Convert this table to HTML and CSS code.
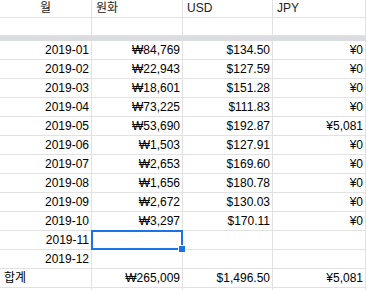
FILE: index.html
```html
<!DOCTYPE html>
<html lang="ko">
<head>
<meta charset="utf-8">
<link rel="stylesheet" href="styles.css">
</head>
<body>
<div class="sheet">
  <div class="row head">
    <div class="cell c">월</div>
    <div class="cell l">원화</div>
    <div class="cell l">USD</div>
    <div class="cell l">JPY</div>
  </div>
  <div class="row blank">
    <div class="cell"></div><div class="cell"></div><div class="cell"></div><div class="cell"></div>
  </div>
  <div class="band"></div>
  <div class="row"><div class="cell r">2019-01</div><div class="cell r">₩84,769</div><div class="cell r">$134.50</div><div class="cell r">¥0</div></div>
  <div class="row"><div class="cell r">2019-02</div><div class="cell r">₩22,943</div><div class="cell r">$127.59</div><div class="cell r">¥0</div></div>
  <div class="row"><div class="cell r">2019-03</div><div class="cell r">₩18,601</div><div class="cell r">$151.28</div><div class="cell r">¥0</div></div>
  <div class="row"><div class="cell r">2019-04</div><div class="cell r">₩73,225</div><div class="cell r">$111.83</div><div class="cell r">¥0</div></div>
  <div class="row"><div class="cell r">2019-05</div><div class="cell r">₩53,690</div><div class="cell r">$192.87</div><div class="cell r">¥5,081</div></div>
  <div class="row"><div class="cell r">2019-06</div><div class="cell r">₩1,503</div><div class="cell r">$127.91</div><div class="cell r">¥0</div></div>
  <div class="row"><div class="cell r">2019-07</div><div class="cell r">₩2,653</div><div class="cell r">$169.60</div><div class="cell r">¥0</div></div>
  <div class="row"><div class="cell r">2019-08</div><div class="cell r">₩1,656</div><div class="cell r">$180.78</div><div class="cell r">¥0</div></div>
  <div class="row"><div class="cell r">2019-09</div><div class="cell r">₩2,672</div><div class="cell r">$130.03</div><div class="cell r">¥0</div></div>
  <div class="row"><div class="cell r">2019-10</div><div class="cell r">₩3,297</div><div class="cell r">$170.11</div><div class="cell r">¥0</div></div>
  <div class="row"><div class="cell r">2019-11</div><div class="cell selected"><div class="sel"><span class="handle"></span></div></div><div class="cell"></div><div class="cell"></div></div>
  <div class="row"><div class="cell r">2019-12</div><div class="cell"></div><div class="cell"></div><div class="cell"></div></div>
  <div class="row"><div class="cell l">합계</div><div class="cell r">₩265,009</div><div class="cell r">$1,496.50</div><div class="cell r">¥5,081</div></div>
  <div class="row"><div class="cell"></div><div class="cell"></div><div class="cell"></div><div class="cell"></div></div>
</div>
</body>
</html>
```
FILE: styles.css
```css
html, body {
  margin: 0;
  padding: 0;
  background: #fff;
}
.sheet {
  width: 366px;
  height: 290px;
  overflow: hidden;
  font-family: "Liberation Sans", Arial, "Noto Sans CJK KR", sans-serif;
  font-size: 12px;
  color: #000;
}
.row {
  display: grid;
  grid-template-columns: 92px 91px 90px 1fr;
  height: 19px;
}
.row.head,
.row.blank {
  height: 18px;
}
.cell {
  box-sizing: border-box;
  border-right: 1px solid #e2e2e2;
  border-bottom: 1px solid #e2e2e2;
  padding: 1px 3px 0 4px;
  line-height: 17px;
  white-space: nowrap;
  overflow: visible;
}
.head .cell {
  padding-top: 0;
  color: #222;
}
.cell.r {
  text-align: right;
  padding-right: 2px;
}
.cell.l {
  text-align: left;
}
.cell.c {
  text-align: center;
  padding-left: 0;
  padding-right: 0;
}
.band {
  height: 5px;
  background: #dadce0;
}
.selected {
  position: relative;
}
.sel {
  position: absolute;
  left: -1px;
  top: -1px;
  width: 92px;
  height: 20px;
  box-sizing: border-box;
  border: 2px solid #1a73e8;
  z-index: 2;
}
.handle {
  position: absolute;
  right: -5px;
  bottom: -5px;
  width: 6px;
  height: 6px;
  background: #1a73e8;
  border: 1px solid #fff;
}
```
